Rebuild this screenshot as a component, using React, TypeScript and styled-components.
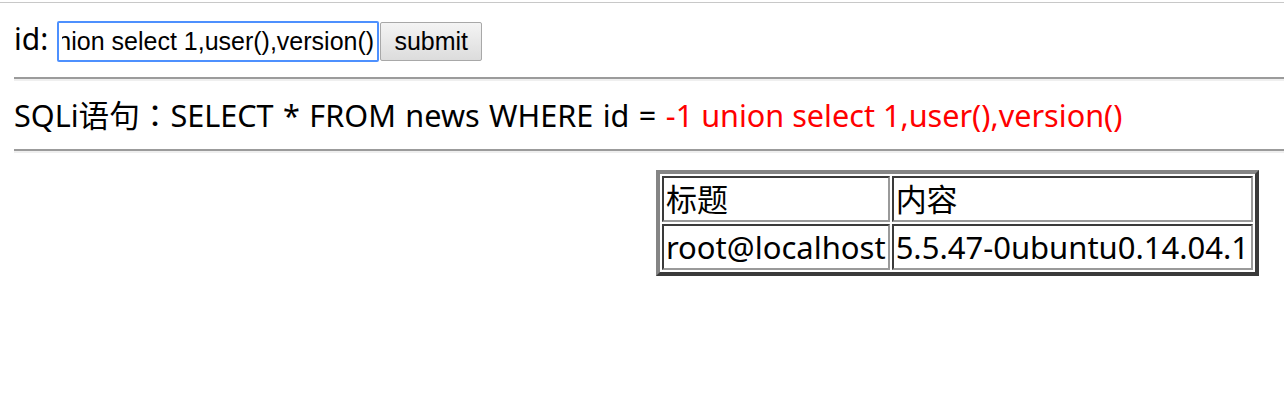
import React, { useLayoutEffect, useRef } from 'react';
import styled, { createGlobalStyle } from 'styled-components';

const GlobalStyle = createGlobalStyle`
  html, body {
    margin: 0;
    padding: 0;
    background: #fff;
    overflow: hidden;
  }
  body {
    font-family: "Noto Sans", "Noto Sans CJK SC", sans-serif;
    color: #000;
  }
`;

const TopEdge = styled.div`
  margin-top: 2px;
  height: 1px;
  background: #c8c8c8;
`;

const Page = styled.div`
  width: 1915px;
  box-sizing: border-box;
  padding: 0 14px;
`;

const QueryForm = styled.form`
  display: flex;
  align-items: flex-start;
  margin: 18px 0 0;
`;

const Label = styled.label`
  font-size: 30px;
  line-height: 36px;
  margin-right: 9px;
`;

const IdInput = styled.input`
  width: 322px;
  height: 41px;
  box-sizing: border-box;
  margin: 0;
  padding: 0 3px;
  border: 2px solid #4d90fe;
  border-radius: 2px;
  outline: none;
  font-family: "Liberation Sans", Arial, sans-serif;
  font-size: 25px;
  color: #000;
`;

const SubmitButton = styled.button`
  width: 102px;
  height: 39px;
  margin: 1px 0 0 1px;
  padding: 0;
  box-sizing: border-box;
  border: 1px solid #a8a8a8;
  border-radius: 2px;
  background: linear-gradient(#f4f4f4, #dcdcdc);
  font-family: "Liberation Sans", Arial, sans-serif;
  font-size: 25px;
  color: #000;
`;

const Rule = styled.hr<{ $top: number }>`
  margin: ${p => p.$top}px 0 0;
  height: 0;
  border: none;
  border-top: 2px solid #9b9b9b;
  border-bottom: 2px solid #efefef;
`;

const Statement = styled.div`
  margin: 11px 0 12px;
  font-size: 30.6px;
  line-height: 44px;
  word-spacing: 1.5px;
  white-space: nowrap;
`;

// full-width colon sits centred in its cell, as in YaHei
const Colon = styled.span`
  font-family: "Noto Sans CJK JP", "Noto Sans CJK SC", sans-serif;
`;

const Injected = styled.span`
  color: #ff0000;
  word-spacing: 0;
`;

const ResultTable = styled.table`
  margin: 17px auto 0;
  border-collapse: separate;
  border-spacing: 2px;
  border: 4px solid;
  border-color: #858585 #3a3a3a #3a3a3a #858585;
  font-size: 31px;
  line-height: 38px;
`;

const Cell = styled.td`
  padding: 2px;
  border: 2px solid;
  border-color: #3a3a3a #9a9a9a #9a9a9a #3a3a3a;
  white-space: nowrap;
`;

const payload = '-1 union select 1,user(),version()';

export default function App() {
  const inputRef = useRef<HTMLInputElement>(null);

  useLayoutEffect(() => {
    const el = inputRef.current;
    if (el) el.scrollLeft = el.scrollWidth;
  }, []);

  return (
    <>
      <GlobalStyle />
      <TopEdge />
      <Page>
        <QueryForm onSubmit={e => e.preventDefault()}>
          <Label htmlFor="id">id:</Label>
          <IdInput id="id" ref={inputRef} defaultValue={payload} />
          <SubmitButton type="submit">submit</SubmitButton>
        </QueryForm>
        <Rule $top={15} />
        <Statement>
          SQLi语句<Colon>：</Colon>SELECT * FROM news WHERE id = <Injected>{payload}</Injected>
        </Statement>
        <Rule $top={0} />
        <ResultTable>
          <tbody>
            <tr>
              <Cell>标题</Cell>
              <Cell>内容</Cell>
            </tr>
            <tr>
              <Cell>root@localhost</Cell>
              <Cell>5.5.47-0ubuntu0.14.04.1</Cell>
            </tr>
          </tbody>
        </ResultTable>
      </Page>
    </>
  );
}
